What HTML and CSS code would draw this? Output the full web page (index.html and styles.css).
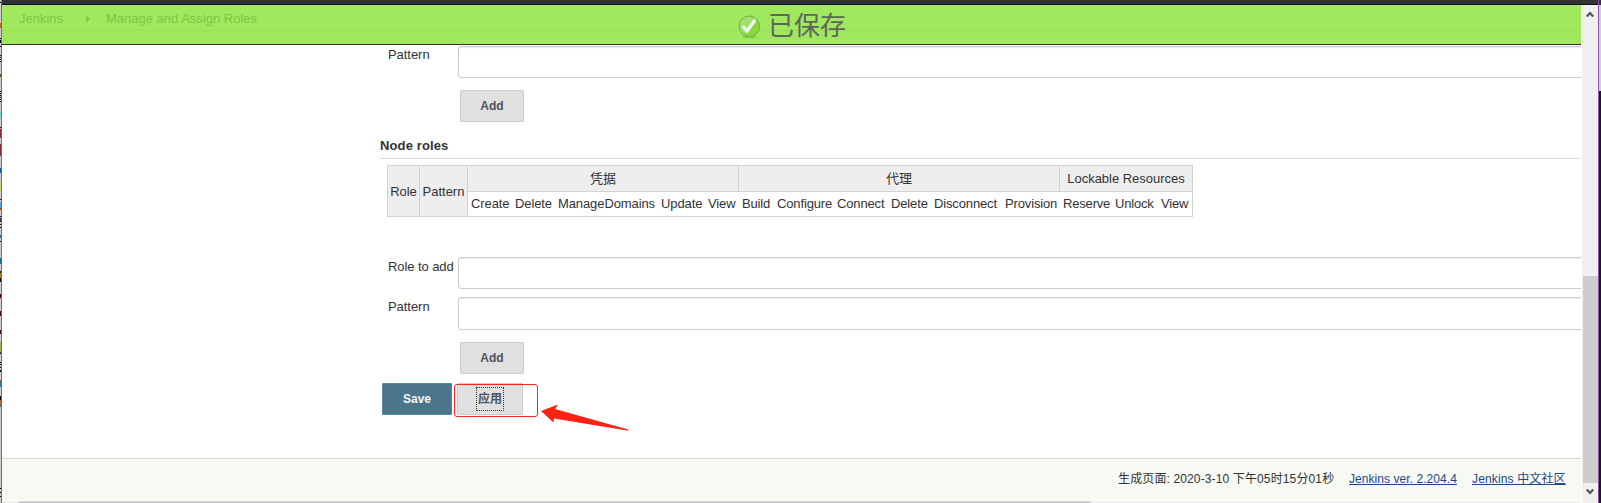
FILE: index.html
```html
<!DOCTYPE html>
<html lang="zh-CN">
<head>
<meta charset="utf-8">
<title>Manage and Assign Roles [Jenkins]</title>
<link rel="stylesheet" href="styles.css">
</head>
<body>
<div class="window">
  <div class="edge-left"></div>
  <div class="page">
    <div class="topbar"></div>
    <div class="notice">
      <div class="crumbs"><span class="crumb-home">Jenkins</span><svg class="crumb-sep" width="5" height="8" viewBox="0 0 5 8"><path d="M0 0l4 4L0 8z"/></svg><span class="crumb-page">Manage and Assign Roles</span></div>
      <div class="saved">
        <svg width="23" height="24" viewBox="0 0 23 24">
          <defs><linearGradient id="orb" x1="0" y1="0" x2="1" y2="1"><stop offset="0" stop-color="#a2e573"/><stop offset=".55" stop-color="#9add66"/><stop offset=".6" stop-color="#83db32"/><stop offset="1" stop-color="#8fdd48"/></linearGradient></defs>
          <ellipse cx="11.5" cy="21.5" rx="7" ry="1.8" fill="#75b840" opacity=".6"/>
          <circle cx="11.3" cy="11.3" r="10.3" fill="url(#orb)" stroke="#72ac44"/>
          <path d="M5.8 12.2l3.2 4.1L16.2 6" fill="none" stroke="#f3f7f0" stroke-width="3.4" stroke-linecap="round" stroke-linejoin="round"/>
        </svg>
        <span class="saved-text">已保存</span>
      </div>
    </div>
    <main class="main">
      <div class="field field-first"><label>Pattern</label><div class="input"></div></div>
      <button class="btn add add-first">Add</button>
      <h2 class="heading"><span>Node roles</span></h2>
      <div class="roles">
        <div class="th tall">Role</div>
        <div class="th tall">Pattern</div>
        <div class="group"><div class="th">凭据</div>
          <div class="perms creds"><span>Create</span><span>Delete</span><span>ManageDomains</span><span>Update</span><span>View</span></div></div>
        <div class="group"><div class="th">代理</div>
          <div class="perms agents"><span>Build</span><span>Configure</span><span>Connect</span><span>Delete</span><span>Disconnect</span><span>Provision</span></div></div>
        <div class="group"><div class="th">Lockable Resources</div>
          <div class="perms locks"><span>Reserve</span><span>Unlock</span><span>View</span></div></div>
      </div>
      <div class="field field-role"><label>Role to add</label><div class="input"></div></div>
      <div class="field field-pattern"><label>Pattern</label><div class="input"></div></div>
      <button class="btn add add-last">Add</button>
      <div class="actions">
        <button class="btn save">Save</button>
        <button class="btn apply"><span>应用</span></button>
        <div class="mark"></div>
        <svg class="arrow" width="92" height="30" viewBox="0 0 92 30"><path d="M2 8L19 1.5L16 6L89 26.5Q90 28 88 27.5L15 15.5L14.5 19.5z" fill="#ff2113"/></svg>
      </div>
    </main>
    <footer class="footer"><span class="stamp">生成页面: 2020-3-10 下午05时15分01秒</span><a class="ver" href="#">Jenkins ver. 2.204.4</a><a class="community" href="#">Jenkins 中文社区</a></footer>
    <div class="hscroll"><div class="hthumb"></div></div>
  </div>
  <div class="side">
    <div class="topbar"></div>
    <div class="vscroll">
      <svg class="up" width="8" height="7" viewBox="0 0 8 7"><path d="M.8 5.5L4 2.1L7.2 5.5" fill="none" stroke="#505050" stroke-width="2.2"/></svg>
      <div class="vthumb"></div>
      <svg class="down" width="8" height="7" viewBox="0 0 8 7"><path d="M.8 1.5L4 4.9L7.2 1.5" fill="none" stroke="#505050" stroke-width="2.2"/></svg>
    </div>
  </div>
  <div class="edge-right"></div>
</div>
</body>
</html>
```

FILE: styles.css
```css
* { box-sizing: border-box; }
body { margin: 0; background: #fff; color: #333; font: 13px/16px "Liberation Sans", "Noto Sans CJK SC", sans-serif; overflow: hidden; }
.window { display: grid; grid-template-columns: 2px 1579px 17px 3px; width: 1601px; height: 503px; overflow: hidden; }
.edge-left {
  border-right: 1px solid #7b5bae;
  background: linear-gradient(#d0d0d0 2px, #000 2px 3px, #d0d0d0 3px 23px, #b96a25 23px 28px, #d0d0d0 28px 38px, #000 38px 39px, #d0d0d0 39px 40px, #112 40px 43px, #d0d0d0 43px 46px, #000 46px 47px, #d0d0d0 47px 55px, #000 55px 56px, #d0d0d0 56px 57px, #000 57px 58px, #d0d0d0 58px 59px, #000 59px 60px, #d0d0d0 60px 61px, #000 61px 62px, #d0d0d0 62px 74px, #642 74px 77px, #d0d0d0 77px 91px, #000 91px 92px, #d0d0d0 92px 93px, #000 93px 94px, #d0d0d0 94px 95px, #000 95px 96px, #d0d0d0 96px 97px, #000 97px 98px, #d0d0d0 98px 99px, #000 99px 100px, #d0d0d0 100px 101px, #000 101px 102px, #d0d0d0 102px 111px, #8cd2d2 111px 118px, #d0d0d0 118px 127px, #000 127px 128px, #d0d0d0 128px 129px, #813038 129px 138px, #d0d0d0 138px 144px, #813038 144px 156px, #d0d0d0 156px 168px, #175a9c 168px 173px, #d0d0d0 173px 182px, #d2cf8a 182px 192px, #d0d0d0 192px 199px, #000 199px 200px, #d0d0d0 200px 202px, #5a9ee0 202px 208px, #a44b20 208px 210px, #d0d0d0 210px 216px, #000 216px 217px, #d0d0d0 217px 218px, #424 218px 222px, #d0d0d0 222px 224px, #000 224px 225px, #d0d0d0 225px 227px, #000 227px 228px, #d0d0d0 228px 235px, #26a 235px 238px, #d0d0d0 238px 241px, #000 241px 242px, #d0d0d0 242px 258px, #15609a 258px 264px, #d0d0d0 264px 271px, #111 271px 273px, #b67a35 273px 278px, #002 278px 282px, #d0d0d0 282px 294px, #402 294px 298px, #d0a060 298px 299px, #d0d0d0 299px 311px, #402 311px 316px, #d0d0d0 316px 330px, #402 330px 334px, #d0d0d0 334px 342px, #9caf60 342px 352px, #000 353px 354px, #d0d0d0 354px 362px, #000 362px 363px, #d0d0d0 363px 364px, #000 364px 365px, #d0d0d0 365px 367px, #000 367px 368px, #d0d0d0 368px 370px, #000 370px 372px, #d0d0d0 372px 380px, #863 380px 382px, #27a 382px 387px, #d0d0d0 387px 396px, #000 396px 400px, #a6672b 400px 405px, #08a 406px 407px, #d0d0d0 407px 488px, #000 488px 489px, #d0d0d0 489px 492px, #000 492px 493px, #d0d0d0 493px 496px, #000 496px 497px, #d0d0d0 497px);
}
.page { height: 503px; overflow: hidden; display: flex; flex-direction: column; }
.topbar { flex: none; height: 5px; background: #333335; border-bottom: 1px solid #111; }
.notice { flex: none; height: 40px; background: linear-gradient(transparent 25px, #94e056 25px 26px, transparent 26px), #a0e95e; border-bottom: 1px solid #333; display: grid; }
.crumbs { grid-area: 1 / 1; display: flex; align-items: center; height: 27px; padding-left: 17px; color: #80c541; white-space: nowrap; }
.crumb-home { width: 67px; }
.crumb-sep { fill: #86cc48; }
.crumb-page { margin-left: 15px; }
.saved { grid-area: 1 / 1; display: flex; align-items: center; gap: 7px; padding-left: 736px; height: 41px; }
.saved svg { margin-top: 3px; }
.saved-text { font: 26px/38px "Noto Sans CJK SC", sans-serif; color: #5c665b; margin-top: -3px; }
.main { flex: none; height: 413px; padding-left: 378px; overflow: hidden; }
.field { display: grid; grid-template-columns: 78px 1130px; height: 32px; }
.field label { padding: 1px 0 0 8px; white-space: nowrap; letter-spacing: -.05px; }
.input { border: 1px solid #ccc; border-radius: 3px; background: #fff; box-shadow: inset 0 1px 1px #ececec; }
.field-first { margin-top: 1px; }
.btn { display: block; height: 32px; padding: 0; border: 1px solid #ccc; border-radius: 1px; background: #e0e0e0; color: #4d545d; font: bold 12px/28px "Liberation Sans", "Noto Sans CJK SC", sans-serif; }
.add { width: 64px; margin-left: 80px; }
.add-first { margin-top: 12px; }
.heading { margin: 16px 0 0; height: 21px; border-bottom: 1px solid #ddd; font: bold 13px/16px "Liberation Sans", sans-serif; letter-spacing: .12px; }
.roles { display: grid; grid-template-columns: 32px 48px 271px 321px 133px; width: 806px; height: 52px; margin: 6px 0 0 7px; border: 1px solid #d3d3cc; border-right: 0; white-space: nowrap; }
.th { height: 26px; line-height: 25px; text-align: center; background: #eee; border-right: 1px solid #d3d3cc; border-bottom: 1px solid #d3d3cc; border-top-left-radius: 3px; letter-spacing: -.02px; }
.tall { height: 50px; line-height: 51px; border-bottom: 0; }
.perms { display: grid; height: 24px; line-height: 24px; padding-left: 3px; letter-spacing: -.1px; }
.creds { grid-template-columns: 44px 43px 103px 47px 30px; }
.agents { grid-template-columns: 35px 60px 54px 43px 71px 52px; letter-spacing: -.14px; }
.locks { grid-template-columns: 52px 46px 28px; border-right: 1px solid #d3d3cc; letter-spacing: -.18px; }
.field-role { margin-top: 40px; }
.field-role label, .field-pattern label { padding-top: 2px; }
.field-role label { letter-spacing: -.08px; }
.field-pattern { margin-top: 8px; height: 33px; }
.add-last { margin-top: 12px; }
.actions { position: relative; display: flex; gap: 5px; margin-top: 9px; padding-left: 2px; }
.save { width: 70px; background: #4b758b; border-color: #5788a1; color: #f5f5f5; }
.apply { width: 66px; }
.apply span { display: block; width: 28px; height: 24px; line-height: 22px; margin: 0 auto; border: 1px dotted #333; }
.mark { position: absolute; left: 74px; top: 1px; width: 84px; height: 33px; border: 1px solid #f02a20; border-radius: 3px; }
.arrow { position: absolute; left: 159px; top: 20px; }
.footer { flex: none; height: 43px; border-top: 1px solid #d3d7cf; border-bottom: 1px solid #fff; background: #f6faf2; display: flex; padding: 12px 0 0 1116px; font-size: 12px; white-space: nowrap; }
.stamp { width: 231px; letter-spacing: .13px; }
.ver { width: 108px; margin-right: 15px; letter-spacing: .06px; }
.community { letter-spacing: .14px; }
.footer a { color: #204a87; height: 16px; }
.hscroll { height: 2px; background: #f0f0f0; padding-left: 17px; }
.hthumb { width: 1072px; height: 2px; background: #cdcdcd; }
.side { display: flex; flex-direction: column; }
.vscroll { flex: 1; background: #f0f0f0; border-left: 1px solid #fff; display: flex; flex-direction: column; align-items: center; }
.up { margin-top: 6px; }
.vthumb { width: 15px; height: 207px; margin-top: 258px; background: #cdcdcd; }
.down { margin-top: 5px; }
.edge-right { border-left: 1px solid #8256b5; background: linear-gradient(#333335 5px, #d0d0d0 5px 91px, #1b1b1e 91px); }
```
